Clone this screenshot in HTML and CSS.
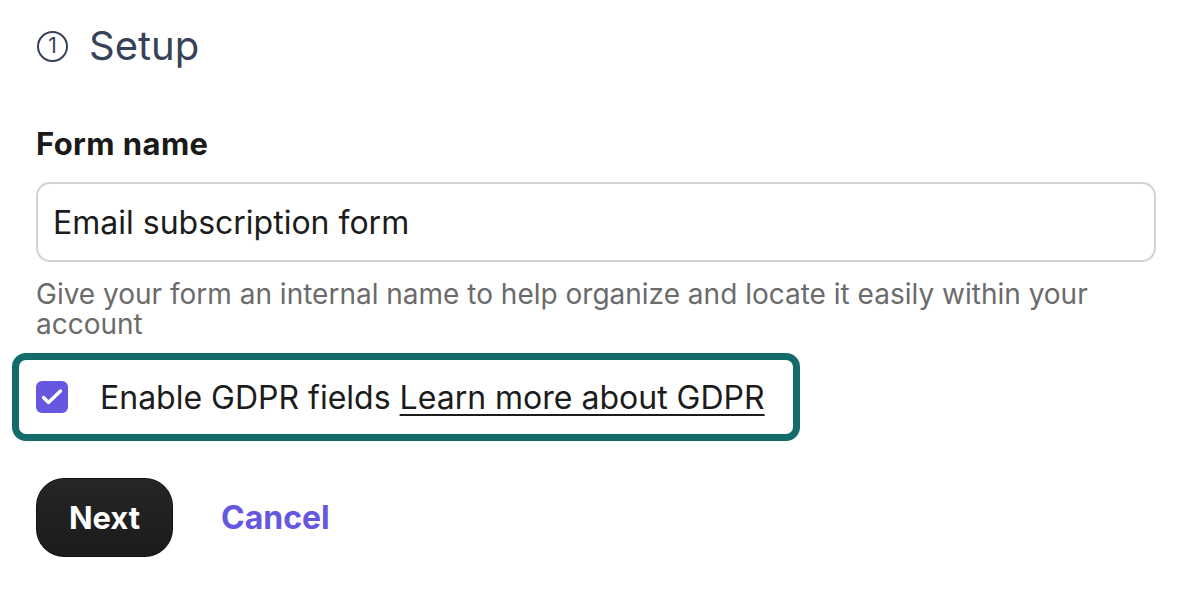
FILE: index.html
```html
<!DOCTYPE html>
<html lang="en">
<head>
<meta charset="utf-8">
<title>Setup</title>
<link rel="stylesheet" href="styles.css">
</head>
<body>
<main class="setup">
  <h1 class="step-title"><span class="step-num">1</span><span>Setup</span></h1>
  <div class="field">
    <label class="field-label" for="form-name">Form name</label>
    <input class="text-input" id="form-name" type="text" value="Email subscription form">
    <p class="hint">Give your form an internal name to help organize and locate it easily within your account</p>
  </div>
  <div class="gdpr">
    <span class="check">
      <svg viewBox="0 0 32 32" width="32" height="32"><path d="M7.5 16.5l5 5L24.5 10" fill="none" stroke="#fff" stroke-width="3.4" stroke-linecap="round" stroke-linejoin="round"/></svg>
    </span>
    <span class="gdpr-text">Enable GDPR fields <a href="#" class="gdpr-link">Learn more about GDPR</a></span>
  </div>
  <div class="actions">
    <button class="btn-next" type="button">Next</button>
    <a href="#" class="btn-cancel">Cancel</a>
  </div>
</main>
</body>
</html>
```
FILE: styles.css
```css
* { box-sizing: border-box; }
body {
  margin: 0;
  background: #fff;
  font-family: Inter, "Noto Sans", sans-serif;
  color: #1c1c1c;
}
.setup {
  padding: 20px 34px 0 37px;
}
.step-title {
  margin: 0;
  display: flex;
  align-items: center;
  gap: 21px;
  font-size: 40px;
  font-weight: 400;
  color: #354257;
  line-height: 52px;
}
.step-num {
  width: 31px;
  height: 31px;
  border: 2px solid #354257;
  border-radius: 50%;
  display: flex;
  align-items: center;
  justify-content: center;
  font-size: 21px;
  font-weight: 400;
  line-height: 1;
  padding-bottom: 1px;
}
.field {
  margin-top: 54px;
  margin-left: -1px;
  display: flex;
  flex-direction: column;
}
.field-label {
  font-size: 31px;
  font-weight: 700;
  line-height: 36px;
  letter-spacing: 0.4px;
  color: #1a1a1a;
}
.text-input {
  margin-top: 20px;
  height: 80px;
  width: 100%;
  border: 2px solid #d3d3d3;
  border-radius: 14px;
  padding: 0 15px;
  font-family: inherit;
  font-size: 32px;
  color: #1c1c1c;
  outline: none;
}
.hint {
  margin: 17px 0 0;
  font-size: 28px;
  line-height: 30px;
  color: #6b6b6b;
}
.gdpr {
  margin: 14px 0 0 -25px;
  width: 788px;
  height: 88px;
  border: 7px solid #136b6b;
  border-radius: 14px;
  display: flex;
  align-items: center;
  padding-left: 17px;
  gap: 32px;
}
.check {
  width: 32px;
  height: 32px;
  border-radius: 6px;
  background: #6557e0;
  display: flex;
}
.gdpr-text {
  font-size: 32px;
  color: #1c1c1c;
}
.gdpr-link {
  color: #1c1c1c;
  text-decoration: underline;
  text-underline-offset: 5px;
  text-decoration-thickness: 2px;
}
.actions {
  margin-top: 37px;
  margin-left: -1px;
  display: flex;
  align-items: center;
  gap: 48px;
}
.btn-next {
  height: 79px;
  width: 137px;
  border: 1px solid #111;
  border-radius: 28px;
  background: linear-gradient(#262626, #1b1b1b);
  color: #fff;
  font-family: inherit;
  font-size: 31px;
  font-weight: 700;
}
.btn-cancel {
  font-size: 32px;
  font-weight: 700;
  color: #6557e0;
  text-decoration: none;
}
```
